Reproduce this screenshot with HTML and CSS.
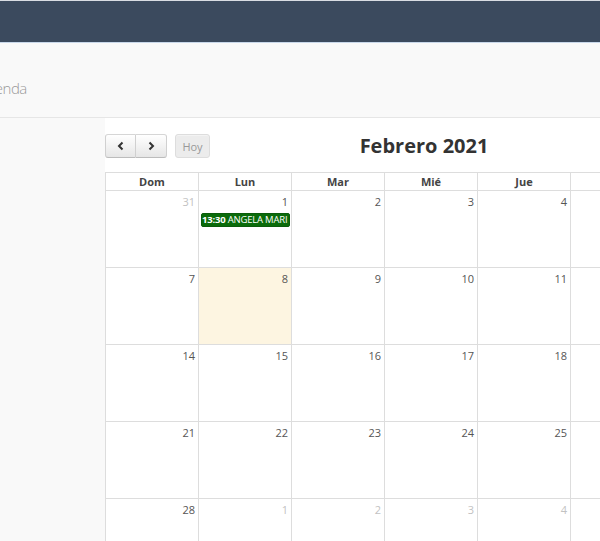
FILE: index.html
```html
<!DOCTYPE html>
<html lang="es">
<head>
    <meta charset="UTF-8">
    <title>Agenda</title>
    <link rel="stylesheet" href="styles.css">
</head>
<body>
    <div class="navbar"></div>

    <div class="page">
        <div class="page-header">
            <h1>Agenda</h1>
        </div>

        <div class="calendar">
            <div class="cal-toolbar">
                <div class="cal-left">
                    <div class="btn-group">
                        <button class="cal-btn" aria-label="Anterior">
                            <svg width="8" height="10" viewBox="0 0 8 10"><polyline points="5.5,1.5 2,5 5.5,8.5" fill="none" stroke="#333" stroke-width="2"/></svg>
                        </button><button class="cal-btn" aria-label="Siguiente">
                            <svg width="8" height="10" viewBox="0 0 8 10"><polyline points="2.5,1.5 6,5 2.5,8.5" fill="none" stroke="#333" stroke-width="2"/></svg>
                        </button>
                    </div>
                    <button class="cal-btn today" disabled>Hoy</button>
                </div>
                <h2 class="cal-title">Febrero 2021</h2>
                <div class="cal-right"></div>
            </div>

            <table class="cal-grid">
                <thead>
                    <tr>
                        <th>Dom</th><th>Lun</th><th>Mar</th><th>Mié</th><th>Jue</th><th>Vie</th><th>Sáb</th>
                    </tr>
                </thead>
                <tbody>
                    <tr>
                        <td class="other"><span class="num">31</span></td>
                        <td>
                            <span class="num">1</span>
                            <div class="event"><b>13:30</b> ANGELA MARI</div>
                        </td>
                        <td><span class="num">2</span></td>
                        <td><span class="num">3</span></td>
                        <td><span class="num">4</span></td>
                        <td><span class="num">5</span></td>
                        <td><span class="num">6</span></td>
                    </tr>
                    <tr>
                        <td><span class="num">7</span></td>
                        <td class="today"><span class="num">8</span></td>
                        <td><span class="num">9</span></td>
                        <td><span class="num">10</span></td>
                        <td><span class="num">11</span></td>
                        <td><span class="num">12</span></td>
                        <td><span class="num">13</span></td>
                    </tr>
                    <tr>
                        <td><span class="num">14</span></td>
                        <td><span class="num">15</span></td>
                        <td><span class="num">16</span></td>
                        <td><span class="num">17</span></td>
                        <td><span class="num">18</span></td>
                        <td><span class="num">19</span></td>
                        <td><span class="num">20</span></td>
                    </tr>
                    <tr>
                        <td><span class="num">21</span></td>
                        <td><span class="num">22</span></td>
                        <td><span class="num">23</span></td>
                        <td><span class="num">24</span></td>
                        <td><span class="num">25</span></td>
                        <td><span class="num">26</span></td>
                        <td><span class="num">27</span></td>
                    </tr>
                    <tr>
                        <td><span class="num">28</span></td>
                        <td class="other"><span class="num">1</span></td>
                        <td class="other"><span class="num">2</span></td>
                        <td class="other"><span class="num">3</span></td>
                        <td class="other"><span class="num">4</span></td>
                        <td class="other"><span class="num">5</span></td>
                        <td class="other"><span class="num">6</span></td>
                    </tr>
                </tbody>
            </table>
        </div>
    </div>
</body>
</html>
```

FILE: styles.css
```css
body {
    margin: 0;
    background: #f9f9f9;
    font-family: 'Open Sans', 'Liberation Sans', sans-serif;
    color: #555;
    overflow: hidden;
}

.navbar {
    height: 41px;
    background: #3b4a5e;
    border-top: 1px solid #d9dde3;
    border-bottom: 1px solid #c9d8ea;
}

/* page is scrolled a little to the right */
.page {
    margin-left: -21px;
    width: 800px;
}

.page-header {
    height: 74px;
    border-bottom: 1px solid #e6e6e6;
    display: flex;
    align-items: center;
}

.page-header h1 {
    margin: 0;
    padding-top: 16px;
    font-size: 15px;
    font-weight: 300;
    letter-spacing: -0.5px;
    color: #999;
}

.calendar {
    margin-left: 126px;
    width: 652px;
    background: #fff;
    padding-top: 16px;
}

.cal-toolbar {
    display: grid;
    grid-template-columns: 1fr auto 1fr;
    align-items: center;
    height: 24px;
    margin-bottom: 14px;
}

.cal-left {
    display: flex;
    gap: 8px;
}

.btn-group {
    display: flex;
}

.cal-btn {
    height: 24px;
    min-width: 31px;
    padding: 0 8px;
    border: 1px solid #ccc;
    border-color: #d6d6d6 #d0d0d0 #bcbcbc;
    background: linear-gradient(#fff, #e6e6e6);
    color: #333;
    display: flex;
    align-items: center;
    justify-content: center;
    box-shadow: inset 0 1px 0 rgba(255, 255, 255, 0.4);
}

.btn-group .cal-btn:first-child {
    border-radius: 3px 0 0 3px;
}

.btn-group .cal-btn:last-child {
    border-radius: 0 3px 3px 0;
    border-left: 0;
}

.cal-btn.today {
    border-radius: 3px;
    min-width: 35px;
    font-family: 'Open Sans', sans-serif;
    font-size: 11px;
    color: #999;
    background: #ececec;
    border-color: #ddd;
    padding: 0 6px;
}

.cal-title {
    margin: 0 14px 0 0;
    font-size: 20px;
    font-weight: bold;
    color: #333;
    line-height: 24px;
}

.cal-grid {
    width: 652px;
    border-collapse: collapse;
    table-layout: fixed;
}

.cal-grid th,
.cal-grid td {
    border: 1px solid #ddd;
}

.cal-grid th {
    height: 17px;
    padding: 0;
    font-size: 11px;
    font-weight: bold;
    color: #444;
    text-align: center;
    line-height: 17px;
}

.cal-grid td {
    height: 73px;
    padding: 3px 0 0;
    vertical-align: top;
}

.num {
    display: block;
    text-align: right;
    padding-right: 3px;
    font-size: 11px;
    line-height: 15px;
    color: #555;
}

.other .num {
    color: #c2c2c2;
}

.today {
    background: #fdf5e1;
}

.event {
    margin: 4px 1px 0 2px;
    height: 12px;
    background: #0a6b0a;
    border: 1px solid #0b5c0b;
    border-radius: 2px;
    color: #fff;
    font-size: 9.5px;
    letter-spacing: -0.2px;
    line-height: 12px;
    white-space: nowrap;
    overflow: hidden;
}
```
